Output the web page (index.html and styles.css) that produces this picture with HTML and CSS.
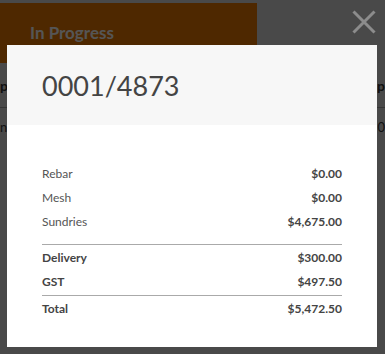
FILE: index.html
```html
<!DOCTYPE html>
<html lang="en">
<head>
    <meta charset="UTF-8">
    <meta name="viewport" content="width=device-width, initial-scale=1.0">
    <title>Order 0001/4873</title>
    <link rel="stylesheet" href="styles.css">
</head>
<body>
    <!-- Page behind the modal -->
    <div class="page">
        <div class="status-bar">
            <div class="status-tab">In Progress</div>
        </div>
        <div class="table-head">
            <span>p</span>
            <span>p</span>
        </div>
        <div class="table-row">
            <span>ns</span>
            <span>0</span>
        </div>
    </div>

    <!-- Dark overlay -->
    <div class="overlay"></div>

    <button class="close-btn" type="button" aria-label="Close">
        <svg width="24" height="24" viewBox="0 0 24 24">
            <path d="M1.5 1.5 L22.5 22.5 M22.5 1.5 L1.5 22.5" stroke="#8c8c8c" stroke-width="3" fill="none"/>
        </svg>
    </button>

    <!-- Order summary modal -->
    <div class="modal">
        <div class="modal-header">
            <h2>0001/4873</h2>
        </div>
        <div class="modal-body">
            <div class="summary-group items">
                <div class="summary-row"><span>Rebar</span><strong>$0.00</strong></div>
                <div class="summary-row"><span>Mesh</span><strong>$0.00</strong></div>
                <div class="summary-row"><span>Sundries</span><strong>$4,675.00</strong></div>
            </div>
            <div class="summary-group">
                <div class="summary-row bold"><span>Delivery</span><strong>$300.00</strong></div>
                <div class="summary-row bold"><span>GST</span><strong>$497.50</strong></div>
            </div>
            <div class="summary-group">
                <div class="summary-row bold"><span>Total</span><strong>$5,472.50</strong></div>
            </div>
        </div>
    </div>
</body>
</html>
```

FILE: styles.css
```css
body {
    margin: 0;
    font-family: "Lato", "Open Sans", sans-serif;
    background-color: #d0d0d0;
    width: 385px;
    height: 354px;
    overflow: hidden;
}

.page {
    padding-top: 3px;
}

.status-bar {
    display: flex;
    height: 60px;
}

.status-tab {
    width: 227px;
    background-color: #df7200;
    color: #f3f3f3;
    font-weight: bold;
    font-size: 17px;
    padding: 19px 0 0 30px;
}

.table-head {
    display: flex;
    justify-content: space-between;
    height: 44px;
    align-items: center;
    border-bottom: 1px solid #999;
    font-weight: bold;
    font-size: 14px;
    color: #333;
}

.table-row {
    display: flex;
    justify-content: space-between;
    height: 38px;
    align-items: center;
    font-size: 13px;
    color: #333;
}

.overlay {
    position: fixed;
    inset: 0;
    background-color: rgba(0, 0, 0, 0.65);
}

.close-btn {
    position: fixed;
    top: 10px;
    left: 352px;
    width: 24px;
    height: 24px;
    padding: 0;
    border: none;
    background: none;
    cursor: pointer;
}

.close-btn svg {
    display: block;
}

.modal {
    position: fixed;
    top: 45px;
    left: 7px;
    width: 370px;
    height: 302px;
    background: #fff;
}

.modal-header {
    background-color: #f7f7f7;
    height: 80px;
    padding: 0 35px;
    display: flex;
    align-items: center;
}

.modal-header h2 {
    margin: 0;
    font-weight: normal;
    font-size: 27px;
    color: #444;
}

.modal-body {
    padding: 36px 35px 0;
}

.summary-group {
    border-bottom: 1px solid #aaa;
    padding-bottom: 2px;
}

.summary-group.items {
    padding-bottom: 11px;
}

.summary-group:last-child {
    border-bottom: none;
}

.summary-row {
    display: flex;
    justify-content: space-between;
    align-items: center;
    height: 24px;
    font-size: 12px;
    color: #555;
}

.summary-row strong {
    color: #444;
}

.summary-row.bold span {
    font-weight: bold;
    color: #444;
}
```
